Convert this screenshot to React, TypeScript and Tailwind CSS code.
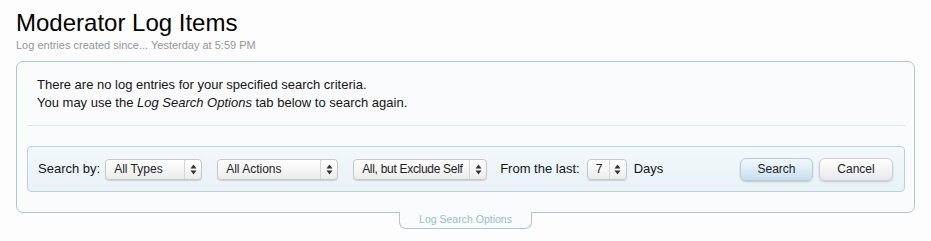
function Stepper() {
  return (
    <svg width="7" height="11" viewBox="0 0 7 11" className="text-[#333]">
      <path d="M3.5 0.5 L6.5 4.5 L0.5 4.5 Z" fill="currentColor" />
      <path d="M3.5 10.5 L6.5 6.5 L0.5 6.5 Z" fill="currentColor" />
    </svg>
  );
}

function FakeSelect({ label, width, labelClass = '' }: { label: string; width: string; labelClass?: string }) {
  return (
    <div
      className={`${width} h-[21px] flex items-stretch rounded-[4px] border border-[#c8c8c8] bg-gradient-to-b from-white to-[#ececec] shadow-[0_1px_1px_rgba(0,0,0,0.15)] text-[12px] text-[#222]`}
    >
      <span className={`flex-1 flex items-center pl-[8px] whitespace-nowrap overflow-hidden ${labelClass}`}>{label}</span>
      <span className="w-[17px] flex items-center justify-center border-l border-[#d6d6d6]">
        <Stepper />
      </span>
    </div>
  );
}

export default function App() {
  return (
    <div className="min-h-[241px] bg-[#fdfdfe] font-['Liberation_Sans',Arial,sans-serif] text-[#141414]">
      <div className="px-[16px] pt-[8px]">
        <h1 className="text-[24px] leading-[30px] text-black">Moderator Log Items</h1>
        <p className="text-[11px] text-[#969696] leading-[14px]">Log entries created since... Yesterday at 5:59 PM</p>

        <div className="mt-[9px] border border-[#a9c9cd] rounded-[7px] bg-[#fafbfd] pl-[10px] pr-[9px] pt-[14px] pb-[20px]">
          <div className="px-[10px] text-[13px] leading-[18px] pb-[13px] border-b border-[#dbe9ec]">
            <p>There are no log entries for your specified search criteria.</p>
            <p>
              You may use the <em>Log Search Options</em> tab below to search again.
            </p>
          </div>

          <div className="mt-[20px] h-[46px] flex items-center rounded-[4px] border border-[#b9d3db] bg-gradient-to-b from-[#f3f8fb] to-[#e9f2f7] pl-[10px] pr-[11px] text-[13px]">
            <span className="mr-[5px]">Search by:</span>
            <FakeSelect label="All Types" width="w-[97px]" />
            <span className="w-[15px]" />
            <FakeSelect label="All Actions" width="w-[121px]" />
            <span className="w-[15px]" />
            <FakeSelect label="All, but Exclude Self" width="w-[134px]" labelClass="tracking-[-0.3px] pl-[7px]" />
            <span className="ml-[13px] mr-[7px]">From the last:</span>
            <FakeSelect label="7" width="w-[40px]" />
            <span className="ml-[7px]">Days</span>
            <div className="flex-1" />
            <button className="w-[73px] h-[23px] rounded-[6px] border border-[#b6ccd8] bg-gradient-to-b from-[#f2f8fc] to-[#c7dfee] shadow-[0_1px_2px_rgba(0,0,0,0.2)] text-[12px] text-[#222]">
              Search
            </button>
            <button className="ml-[6px] w-[74px] h-[23px] rounded-[6px] border border-[#cfcfd4] bg-gradient-to-b from-white to-[#e8e8ee] shadow-[0_1px_2px_rgba(0,0,0,0.2)] text-[12px] text-[#222]">
              Cancel
            </button>
          </div>
        </div>

        <div className="flex justify-center -mt-px">
          <div className="w-[133px] h-[17px] border border-t-0 border-[#a9c9cd] rounded-b-[7px] bg-[#fafbfd] text-[10.5px] text-[#9bbbcc] flex items-center justify-center">
            Log Search Options
          </div>
        </div>
      </div>
    </div>
  );
}
